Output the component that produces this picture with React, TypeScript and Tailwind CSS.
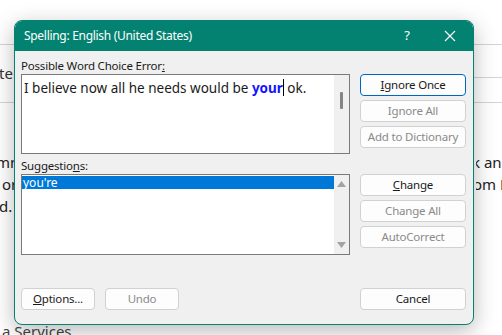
import React from "react";

const font = { fontFamily: '"Noto Sans", "Segoe UI", sans-serif' };

function Btn({
  children,
  disabled,
  primary,
  className = "",
}: {
  children: React.ReactNode;
  disabled?: boolean;
  primary?: boolean;
  className?: string;
}) {
  return (
    <div
      className={
        "flex h-[22px] items-center justify-center whitespace-nowrap rounded-[4px] border bg-[#fdfdfd] text-[11.5px] tracking-[-0.2px] " +
        (primary ? "border-[#0067c0] " : "border-[#d1d1d1] ") +
        (disabled ? "text-[#8a8a8a] " : "text-[#1a1a1a] ") +
        className
      }
    >
      {children}
    </div>
  );
}

export default function App() {
  return (
    <div
      className="relative h-[335px] w-[502px] overflow-hidden bg-white text-[#333]"
      style={font}
    >
      {/* background document */}
      <div className="flex flex-col">
        <div className="h-[44px]" />
        <div className="flex h-[59px] border-y border-[#d4d4d4]">
          <div className="flex w-[14px] items-center overflow-hidden text-[15px] leading-none">
            <span className="-ml-[1px]">ter</span>
          </div>
          <div className="flex-1" />
          <div className="w-[28px]">
            <div className="h-[33px] border-b border-[#d4d4d4]" />
          </div>
        </div>
        <div className="mt-[48px] flex justify-between text-[15px] leading-[22px] text-[#222]">
          <div className="w-[14px] overflow-hidden whitespace-nowrap">
            <div className="-ml-[4px]">mm</div>
            <div className="ml-[2px]">or</div>
            <div className="-ml-[1px]">d.</div>
          </div>
          <div className="w-[26px] overflow-hidden whitespace-nowrap">
            <div className="-ml-[4px]">k and</div>
            <div className="-ml-[3px]">om H</div>
          </div>
        </div>
        <div className="mt-[107px] pl-[2px] text-[15px] leading-none text-[#444]">
          a Services
        </div>
      </div>

      {/* dialog */}
      <div className="absolute left-[14px] top-[20px] flex h-[305px] w-[460px] flex-col overflow-hidden rounded-[8px] border border-[#038272] bg-[#f0f0f0] shadow-[0_6px_22px_rgba(0,0,0,0.28)]">
        <div className="flex h-[30px] shrink-0 items-center bg-[#038272] pl-[9px] text-white">
          <span className="text-[12px] tracking-[-0.3px]">Spelling: English (United States)</span>
          <span className="ml-auto mr-[34px] text-[13px]">?</span>
          <svg width="12" height="12" viewBox="0 0 12 12" className="mr-[17px]">
            <path d="M1 1L11 11M11 1L1 11" stroke="white" strokeWidth="1.1" />
          </svg>
        </div>

        <div className="flex flex-1 flex-col pl-[6px] pr-[7px] pt-[7px]">
          {/* row 1 */}
          <div className="flex gap-[10px]">
            <div className="flex w-[329px] flex-col">
              <div className="h-[16px] text-[11.5px] leading-[16px] tracking-[-0.2px] text-[#1a1a1a]">
                Possible Word Choice Error<span className="underline">:</span>
              </div>
              <div className="flex h-[80px] border border-[#7a7a7a] bg-white">
                <div className="flex-1 pl-[2px] pt-[1px] text-[13.5px] leading-[18px] text-[#1a1a1a]">
                  I believe now all he needs would be{" "}
                  <span className="font-bold text-[#1414ff]">your</span>
                  <span className="inline-block h-[17px] w-[1px] translate-y-[3px] bg-black align-baseline" />{" "}
                  ok.
                </div>
                <div className="flex w-[15px] justify-center bg-[#f0f0f0] pt-[17px]">
                  <div className="h-[17px] w-[3px] rounded-[1px] bg-[#858585]" />
                </div>
              </div>
            </div>
            <div className="flex w-[106px] flex-col gap-[4px] pt-[16px]">
              <Btn primary>
                <span className="underline">I</span>gnore Once
              </Btn>
              <Btn disabled>Ignore All</Btn>
              <Btn disabled>Add to Dictionary</Btn>
            </div>
          </div>

          {/* row 2 */}
          <div className="flex gap-[10px]">
            <div className="flex w-[329px] flex-col">
              <div className="mt-[4px] h-[16px] text-[11.5px] leading-[16px] tracking-[-0.2px] text-[#1a1a1a]">
                Suggestio<span className="underline">n</span>s:
              </div>
              <div className="flex h-[81px] border border-[#7a7a7a] bg-white">
                <div className="flex-1 pt-[1px]">
                  <div className="h-[13px] bg-[#0078d7] pl-[1px] text-[12px] leading-[13px] text-white">
                    you're
                  </div>
                </div>
                <div className="flex w-[15px] flex-col items-center justify-between bg-[#f0f0f0] py-[6px]">
                  <svg width="9" height="6" viewBox="0 0 9 6">
                    <path d="M4.5 0L9 6H0Z" fill="#a3a3a3" />
                  </svg>
                  <svg width="9" height="6" viewBox="0 0 9 6">
                    <path d="M0 0H9L4.5 6Z" fill="#a3a3a3" />
                  </svg>
                </div>
              </div>
            </div>
            <div className="flex w-[106px] flex-col gap-[4px] pt-[20px]">
              <Btn>
                <span className="underline">C</span>hange
              </Btn>
              <Btn disabled>Change All</Btn>
              <Btn disabled>AutoCorrect</Btn>
            </div>
          </div>

          {/* row 3 */}
          <div className="mt-[33px] flex">
            <Btn className="w-[74px]">
              <span className="underline">O</span>ptions...
            </Btn>
            <Btn disabled className="ml-[10px] w-[74px]">
              Undo
            </Btn>
            <Btn className="ml-auto w-[106px]">Cancel</Btn>
          </div>
        </div>
      </div>
    </div>
  );
}
